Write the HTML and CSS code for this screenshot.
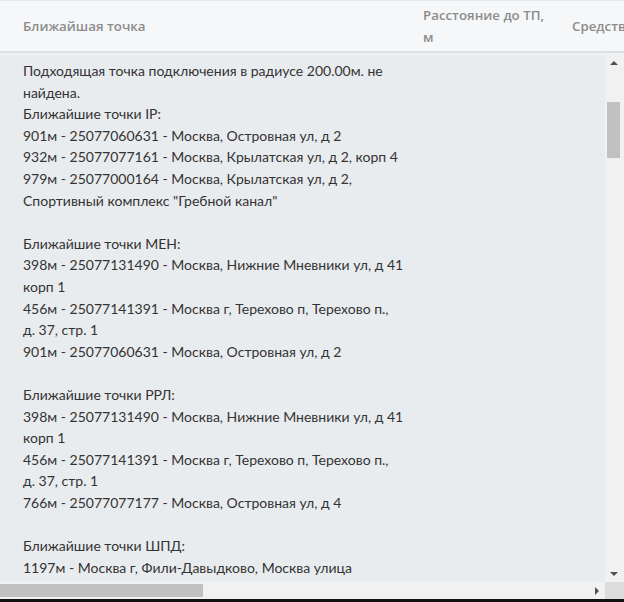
FILE: index.html
```html
<!DOCTYPE html>
<html lang="ru">
<head>
<meta charset="utf-8">
<title>Ближайшая точка</title>
<link rel="stylesheet" href="styles.css">
</head>
<body>
<div class="table">
  <div class="thead">
    <div class="th c1">Ближайшая точка</div>
    <div class="th c2">Расстояние до ТП,<br>м</div>
    <div class="th c3">Средства</div>
  </div>
  <div class="scroller">
    <div class="viewport">
      <div class="row">
        <div class="cell">Подходящая точка подключения в радиусе 200.00м. не<br>найдена.<br>Ближайшие точки IP:<br>901м - 25077060631 - Москва, Островная ул, д 2<br>932м - 25077077161 - Москва, Крылатская ул, д 2, корп 4<br>979м - 25077000164 - Москва, Крылатская ул, д 2,<br>Спортивный комплекс "Гребной канал"<br><br>Ближайшие точки МЕН:<br>398м - 25077131490 - Москва, Нижние Мневники ул, д 41<br>корп 1<br>456м - 25077141391 - Москва г, Терехово п, Терехово п.,<br>д. 37, стр. 1<br>901м - 25077060631 - Москва, Островная ул, д 2<br><br>Ближайшие точки РРЛ:<br>398м - 25077131490 - Москва, Нижние Мневники ул, д 41<br>корп 1<br>456м - 25077141391 - Москва г, Терехово п, Терехово п.,<br>д. 37, стр. 1<br>766м - 25077077177 - Москва, Островная ул, д 4<br><br>Ближайшие точки ШПД:<br>1197м - Москва г, Фили-Давыдково, Москва улица</div>
      </div>
    </div>
    <div class="vbar">
      <div class="btn"><span class="tri up"></span></div>
      <div class="vthumb"></div>
      <div class="fill"></div>
      <div class="btn"><span class="tri down"></span></div>
    </div>
    <div class="hbar">
      <div class="hthumb"></div>
      <div class="fill"></div>
      <div class="hbtn"><span class="tri right"></span></div>
    </div>
    <div class="corner"></div>
  </div>
</div>
<div class="strip"></div>
</body>
</html>
```
FILE: styles.css
```css
html, body {
  margin: 0;
  padding: 0;
}
body {
  width: 624px;
  height: 602px;
  overflow: hidden;
  background: #f6f7f9;
  font-family: "Open Sans", "Noto Sans", sans-serif;
}
.table {
  display: flex;
  flex-direction: column;
}
.thead {
  display: flex;
  box-sizing: border-box;
  height: 53px;
  padding-top: 2px;
  border-top: 1px solid #e6e8eb;
  border-bottom: 2px solid #dcdfe3;
  background: #f6f7f9;
  color: #8c8c8c;
  font-size: 13.3px;
  font-weight: 600;
  line-height: 21.6px;
  white-space: nowrap;
  overflow: hidden;
}
.th {
  display: flex;
  align-items: center;
  box-sizing: border-box;
  flex: none;
}
.c1 { width: 408px; padding-left: 23px; }
.c2 { width: 149px; padding-left: 15px; }
.c3 { width: 67px; padding-left: 15px; overflow: hidden; }
.scroller {
  display: grid;
  grid-template-columns: 605px 19px;
  grid-template-rows: 528px 17px;
  border-top: 1px solid #eef0f3;
}
.viewport {
  overflow: hidden;
  background: #e9ecef;
}
.row {
  border-top: 1px solid #f1f3f5;
  padding: 5px 0 0 23px;
}
.cell {
  color: #333;
  font-family: Lato, "Open Sans", sans-serif;
  font-size: 14px;
  line-height: 21.6px;
  white-space: nowrap;
}
.vbar {
  display: flex;
  flex-direction: column;
  background: #f1f1f1;
  padding-right: 2px;
}
.btn {
  height: 17px;
  display: flex;
  align-items: center;
  justify-content: center;
  flex: none;
}
.vthumb {
  margin: 31px 2px 0;
  height: 56px;
  background: #c1c1c1;
  flex: none;
}
.fill { flex: 1; }
.hbar {
  display: flex;
  background: #f1f1f1;
}
.hthumb {
  margin: 2px 0 2px 0;
  width: 203px;
  background: #c1c1c1;
  flex: none;
}
.hbtn {
  width: 17px;
  display: flex;
  align-items: center;
  justify-content: center;
  flex: none;
}
.corner { background: #dcdcdc; }
.tri {
  width: 0;
  height: 0;
  border-style: solid;
  border-color: transparent;
}
.tri.up {
  border-width: 0 4px 4px 4px;
  border-bottom-color: #505050;
}
.tri.down {
  border-width: 4px 4px 0 4px;
  border-top-color: #505050;
}
.tri.right {
  border-width: 4px 0 4px 4px;
  border-left-color: #505050;
}
.strip {
  height: 3px;
  background: #111;
}
```
